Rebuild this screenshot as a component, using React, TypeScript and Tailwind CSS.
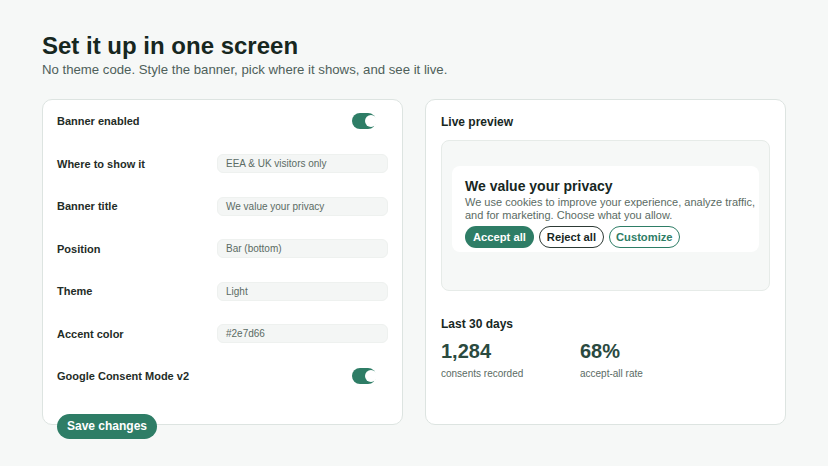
import React from 'react'

const font = { fontFamily: '"Liberation Sans", Arial, Helvetica, sans-serif' }

function Toggle() {
  return (
    <div className="relative h-4 w-6 rounded-full bg-[#2e7d66]">
      <span className="absolute right-[-1px] top-[2px] h-3 w-3 rounded-full bg-white" />
    </div>
  )
}

function Field({ value }: { value: string }) {
  return (
    <div className="flex h-[19px] w-[171px] items-center rounded-md border border-[#eef1ef] bg-[#f4f6f5] px-2 text-[10px] text-[#5b6b64]">
      {value}
    </div>
  )
}

const rows: { label: string; value?: string }[] = [
  { label: 'Banner enabled' },
  { label: 'Where to show it', value: 'EEA & UK visitors only' },
  { label: 'Banner title', value: 'We value your privacy' },
  { label: 'Position', value: 'Bar (bottom)' },
  { label: 'Theme', value: 'Light' },
  { label: 'Accent color', value: '#2e7d66' },
  { label: 'Google Consent Mode v2' },
]

export default function App() {
  return (
    <div className="min-h-screen w-full bg-[#f6f8f7] px-[42px] pt-[32px] text-[#1b2b25]" style={font}>
      <h1 className="text-[24px] font-bold leading-[28px] text-[#17271f]">Set it up in one screen</h1>
      <p className="mt-[2px] text-[13.2px] leading-[16px] text-[#4e605a]">
        No theme code. Style the banner, pick where it shows, and see it live.
      </p>

      <div className="mt-[21px] flex gap-[22px]">
        {/* Settings */}
        <div className="h-[326px] w-[361px] rounded-[10px] border border-[#dde4e1] bg-white pl-[14px] pr-[14px]">
          <div className="flex flex-col">
            {rows.map((r) => (
              <div key={r.label} className="flex h-[42.5px] items-center justify-between">
                <span className="text-[11px] font-bold text-[#1f2d27]">{r.label}</span>
                {r.value ? (
                  <Field value={r.value} />
                ) : (
                  <div className="mr-[12px]">
                    <Toggle />
                  </div>
                )}
              </div>
            ))}
          </div>
          <button className="mt-[16px] h-[25px] rounded-full bg-[#2e7d66] px-[10px] text-[12px] font-bold text-white">
            Save changes
          </button>
        </div>

        {/* Preview */}
        <div className="h-[326px] w-[361px] rounded-[10px] border border-[#dde4e1] bg-white px-[15px] pt-[14px]">
          <h2 className="text-[12px] font-bold leading-[16px] text-[#17271f]">Live preview</h2>
          <div className="mt-[10px] h-[151px] rounded-lg border border-[#e6ebe8] bg-[#f6f8f7] px-[10px] pt-[25px]">
            <div className="rounded-lg bg-white pb-[4px] pl-[13px] pr-[2px] pt-[11px]">
              <div className="text-[14px] font-bold leading-[18px] text-[#17271f]">We value your privacy</div>
              <p className="mt-[1px] whitespace-nowrap text-[11px] leading-[13px] text-[#5b6b64]">
                We use cookies to improve your experience, analyze traffic,
                <br />
                and for marketing. Choose what you allow.
              </p>
              <div className="mt-[4px] flex gap-[5px]">
                <button className="h-[22px] rounded-full bg-[#2e7d66] px-[8px] text-[11.2px] font-semibold text-white">
                  Accept all
                </button>
                <button className="h-[22px] rounded-full border border-[#2d3a35] bg-white px-[7px] text-[11.2px] font-semibold text-[#17271f]">
                  Reject all
                </button>
                <button className="h-[22px] rounded-full border border-[#2e7d66] bg-white px-[6px] text-[11.2px] font-semibold text-[#2e7d66]">
                  Customize
                </button>
              </div>
            </div>
          </div>

          <h3 className="mt-[25px] text-[12px] font-bold leading-[16px] text-[#17271f]">Last 30 days</h3>
          <div className="mt-[7px] flex">
            <div className="w-[139px]">
              <div className="text-[20px] font-bold leading-[24px] text-[#2b4a3f]">1,284</div>
              <div className="mt-[3px] text-[10px] text-[#5b6b64]">consents recorded</div>
            </div>
            <div>
              <div className="text-[20px] font-bold leading-[24px] text-[#2b4a3f]">68%</div>
              <div className="mt-[3px] text-[10px] text-[#5b6b64]">accept-all rate</div>
            </div>
          </div>
        </div>
      </div>
    </div>
  )
}
